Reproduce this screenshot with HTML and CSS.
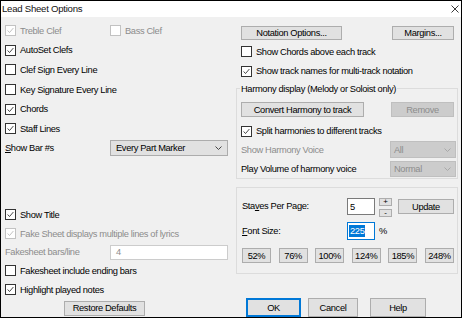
FILE: index.html
```html
<!DOCTYPE html>
<html lang="en">
<head>
  <meta charset="UTF-8">
  <title>Lead Sheet Options</title>
  <link rel="stylesheet" href="styles.css">
</head>
<body>
  <div class="dialog">
    <div class="titlebar">
      <span class="title">Lead Sheet Options</span>
      <svg class="close" width="8" height="8" viewBox="0 0 8 8"><path d="M0.5 0.5 L7.5 7.5 M7.5 0.5 L0.5 7.5" stroke="#222" stroke-width="0.9" fill="none"/></svg>
    </div>

    <div class="body">
      <!-- left column -->
      <div class="left">
        <div class="top-rows">
          <div class="row">
            <label class="check disabled wide"><span class="box"><svg viewBox="0 0 11 11"><path d="M2 5.5 L4.3 8 L9 2.5"/></svg></span>Treble Clef</label>
            <label class="check disabled"><span class="box"></span>Bass Clef</label>
          </div>
          <div class="row"><label class="check"><span class="box"><svg viewBox="0 0 11 11"><path d="M2 5.5 L4.3 8 L9 2.5"/></svg></span>AutoSet Clefs</label></div>
          <div class="row"><label class="check"><span class="box"></span>Clef Sign Every Line</label></div>
          <div class="row"><label class="check"><span class="box"></span>Key Signature Every Line</label></div>
          <div class="row"><label class="check"><span class="box"><svg viewBox="0 0 11 11"><path d="M2 5.5 L4.3 8 L9 2.5"/></svg></span>Chords</label></div>
          <div class="row"><label class="check"><span class="box"><svg viewBox="0 0 11 11"><path d="M2 5.5 L4.3 8 L9 2.5"/></svg></span>Staff Lines</label></div>
          <div class="row">
            <span class="field-label"><u>S</u>how Bar #s</span>
            <div class="select wide-select">Every Part Marker<svg class="chev" viewBox="0 0 7 4"><path d="M0.5 0.5 L3.5 3.5 L6.5 0.5"/></svg></div>
          </div>
        </div>

        <div class="bottom-rows">
          <div class="row2"><label class="check"><span class="box"><svg viewBox="0 0 11 11"><path d="M2 5.5 L4.3 8 L9 2.5"/></svg></span>Show Title</label></div>
          <div class="row2"><label class="check disabled"><span class="box"><svg viewBox="0 0 11 11"><path d="M2 5.5 L4.3 8 L9 2.5"/></svg></span>Fake Sheet displays multiple lines of lyrics</label></div>
          <div class="row2">
            <span class="field-label disabled">Fakesheet bars/line</span>
            <div class="input input-disabled wide-select">4</div>
          </div>
          <div class="row2"><label class="check"><span class="box"></span>Fakesheet include ending bars</label></div>
          <div class="row2"><label class="check"><span class="box"><svg viewBox="0 0 11 11"><path d="M2 5.5 L4.3 8 L9 2.5"/></svg></span>Highlight played notes</label></div>
        </div>

        <button class="btn restore">Restore Defaults</button>
      </div>

      <!-- right column -->
      <div class="right">
        <div class="btn-row">
          <button class="btn notation">Notation Options...</button>
          <button class="btn margins">Margins...</button>
        </div>
        <div class="rrow first"><label class="check"><span class="box"></span>Show Chords above each track</label></div>
        <div class="rrow"><label class="check"><span class="box"><svg viewBox="0 0 11 11"><path d="M2 5.5 L4.3 8 L9 2.5"/></svg></span>Show track names for multi-track notation</label></div>

        <div class="group">
          <div class="group-label">Harmony display (Melody or Soloist only)</div>
          <div class="g-btns">
            <button class="btn convert">Convert Harmony to track</button>
            <button class="btn remove" disabled>Remove</button>
          </div>
          <div class="g-check"><label class="check"><span class="box"><svg viewBox="0 0 11 11"><path d="M2 5.5 L4.3 8 L9 2.5"/></svg></span>Split harmonies to different tracks</label></div>
          <div class="g-sel">
            <span class="disabled">Show Harmony Voice</span>
            <div class="select small-select off">All<svg class="chev" viewBox="0 0 7 4"><path d="M0.5 0.5 L3.5 3.5 L6.5 0.5"/></svg></div>
          </div>
          <div class="g-sel second">
            <span>Play Volume of harmony voice</span>
            <div class="select small-select off">Normal<svg class="chev" viewBox="0 0 7 4"><path d="M0.5 0.5 L3.5 3.5 L6.5 0.5"/></svg></div>
          </div>
        </div>

        <div class="panel">
          <div class="staves">
            <span class="p-label">Sta<u>v</u>es Per Page:</span>
            <div class="input num">5</div>
            <div class="spin">
              <button class="btn spin-btn">+</button>
              <button class="btn spin-btn">-</button>
            </div>
            <button class="btn update">Update</button>
          </div>
          <div class="fontsize">
            <span class="p-label"><u>F</u>ont Size:</span>
            <div class="input num focus"><span class="sel">225</span></div>
            <span class="pct">%</span>
          </div>
          <div class="pct-row">
            <button class="btn pbtn">52%</button>
            <button class="btn pbtn">76%</button>
            <button class="btn pbtn">100%</button>
            <button class="btn pbtn">124%</button>
            <button class="btn pbtn">185%</button>
            <button class="btn pbtn">248%</button>
          </div>
        </div>

        <div class="actions">
          <button class="btn ok">OK</button>
          <button class="btn cancel">Cancel</button>
          <button class="btn help">Help</button>
        </div>
      </div>
    </div>
  </div>
</body>
</html>
```

FILE: styles.css
```css
body {
  margin: 0;
  background: #ffffff;
  font-family: "Liberation Sans", Arial, sans-serif;
  font-size: 9.3px;
  letter-spacing: -0.35px;
  line-height: 12px;
  color: #000;
}

.dialog {
  width: 462px;
  height: 318px;
  box-sizing: border-box;
  border: 1px solid #000;
  background: #f0f0f0;
  overflow: hidden;
  display: flex;
  flex-direction: column;
}

.titlebar {
  height: 16px;
  flex: none;
  background: #fff;
  display: flex;
  align-items: center;
  padding-left: 1px;
}

.title {
  font-size: 9.6px;
  letter-spacing: -0.25px;
  color: #111;
}

.close {
  margin-left: auto;
  margin-right: 2px;
}

.body {
  display: grid;
  grid-template-columns: 231px 229px;
}

/* checkboxes */
.check {
  display: flex;
  align-items: center;
  white-space: nowrap;
}

.check.wide {
  width: 105px;
}

.box {
  width: 11px;
  height: 11px;
  box-sizing: border-box;
  border: 1px solid #333;
  background: #fff;
  margin-right: 4px;
  flex: none;
  display: flex;
}

.box svg {
  width: 9px;
  height: 9px;
}

.box svg path {
  fill: none;
  stroke: #222;
  stroke-width: 1;
}

.disabled {
  color: #8c8c8c;
}

.check.disabled .box {
  border-color: #c2c2c2;
}

.check.disabled .box svg path {
  stroke: #b4b4b4;
}

/* left column */
.left {
  padding: 4px 0 0 4px;
  display: flex;
  flex-direction: column;
}

.row {
  height: 19.6px;
  display: flex;
  align-items: center;
}

.row2 {
  height: 18.7px;
  display: flex;
  align-items: center;
}

.bottom-rows {
  margin-top: 47.4px;
}

.field-label {
  width: 105px;
  flex: none;
}

.select {
  box-sizing: border-box;
  background: #e1e1e1;
  border: 1px solid #acacac;
  display: flex;
  align-items: center;
  white-space: nowrap;
}

.select .chev {
  width: 7px;
  height: 4px;
  margin-left: auto;
}

.chev path {
  fill: none;
  stroke: #444;
  stroke-width: 1;
}

.wide-select {
  width: 118px;
  height: 16px;
  padding-left: 5px;
}

.wide-select .chev {
  margin-right: 5px;
}

.select.off {
  background: #cccccc;
  border-color: #bfbfbf;
  color: #8c8c8c;
}

.select.off .chev path {
  stroke: #a8a8a8;
}

.input {
  box-sizing: border-box;
  background: #fff;
  border: 1px solid #7a7a7a;
  display: flex;
  align-items: center;
}

.input-disabled {
  border-color: #cccccc;
  color: #8c8c8c;
  height: 15px;
}

/* buttons */
.btn {
  font-family: inherit;
  font-size: inherit;
  letter-spacing: inherit;
  line-height: 12px;
  color: #000;
  background: #e1e1e1;
  border: 1px solid #adadad;
  padding: 0;
  margin: 0;
  box-sizing: border-box;
  text-align: center;
}

.btn:disabled {
  background: #cccccc;
  border-color: #bfbfbf;
  color: #8c8c8c;
}

.restore {
  width: 81px;
  height: 15px;
  margin: 2px 0 0 59px;
}

/* right column */
.right {
  display: flex;
  flex-direction: column;
}

.btn-row {
  display: flex;
  justify-content: space-between;
  padding: 9px 7px 0 9px;
}

.notation {
  width: 101px;
  height: 14px;
}

.margins {
  width: 62px;
  height: 14px;
}

.rrow {
  height: 19.5px;
  display: flex;
  align-items: center;
  padding-left: 9px;
}

.rrow.first {
  margin-top: 2px;
}

.group {
  margin: 7px 3px 0 4px;
  border: 1px solid #dcdcdc;
  padding: 0 1px 1px 4px;
}

.group-label {
  margin: -6px 0 0 -1px;
  padding: 0 1px;
  width: fit-content;
  background: #f0f0f0;
}

.g-btns {
  display: flex;
  justify-content: space-between;
  margin-top: 7px;
  padding-right: 2px;
}

.convert {
  width: 123px;
  height: 15px;
}

.remove {
  width: 63px;
  height: 15px;
}

.g-check {
  height: 20px;
  margin-top: 4px;
  display: flex;
  align-items: center;
}

.g-sel {
  height: 17px;
  display: flex;
  align-items: center;
  justify-content: space-between;
}

.g-sel.second {
  margin-top: 3px;
  height: 16px;
}

.small-select {
  width: 66px;
  height: 100%;
  padding-left: 3px;
}

.small-select .chev {
  margin-right: 4px;
}

.panel {
  margin: 8px 3px 0 4px;
  border: 1px solid #dcdcdc;
  padding: 10px 3px 10px 5px;
}

.staves {
  display: flex;
  align-items: flex-start;
  height: 19px;
}

.p-label {
  width: 105px;
  flex: none;
  line-height: 17px;
}

.num {
  width: 28px;
  height: 17px;
  padding-left: 2px;
}

.spin {
  display: flex;
  flex-direction: column;
  gap: 3px;
  margin-left: 4px;
}

.spin-btn {
  width: 13px;
  height: 8px;
  line-height: 6px;
  font-size: 8px;
}

.update {
  width: 56px;
  height: 15px;
  margin: 1px 0 0 6px;
}

.fontsize {
  display: flex;
  align-items: center;
  margin-top: 5px;
  height: 18px;
}

.fontsize .num {
  height: 18px;
  padding-left: 1px;
}

.focus {
  border-color: #0078d7;
}

.sel {
  background: #0078d7;
  color: #fff;
  padding: 0 1px;
}

.pct {
  margin-left: 4px;
}

.pct-row {
  display: flex;
  justify-content: space-between;
  margin-top: 8px;
}

.pbtn {
  width: 29px;
  height: 15px;
}

.actions {
  display: flex;
  margin: 24px 0 0 14px;
}

.actions .btn {
  height: 19px;
}

.ok {
  width: 55px;
  border: 2px solid #0078d7;
}

.cancel {
  width: 50px;
  margin-left: 7px;
}

.help {
  width: 56px;
  margin-left: 12px;
}
```
